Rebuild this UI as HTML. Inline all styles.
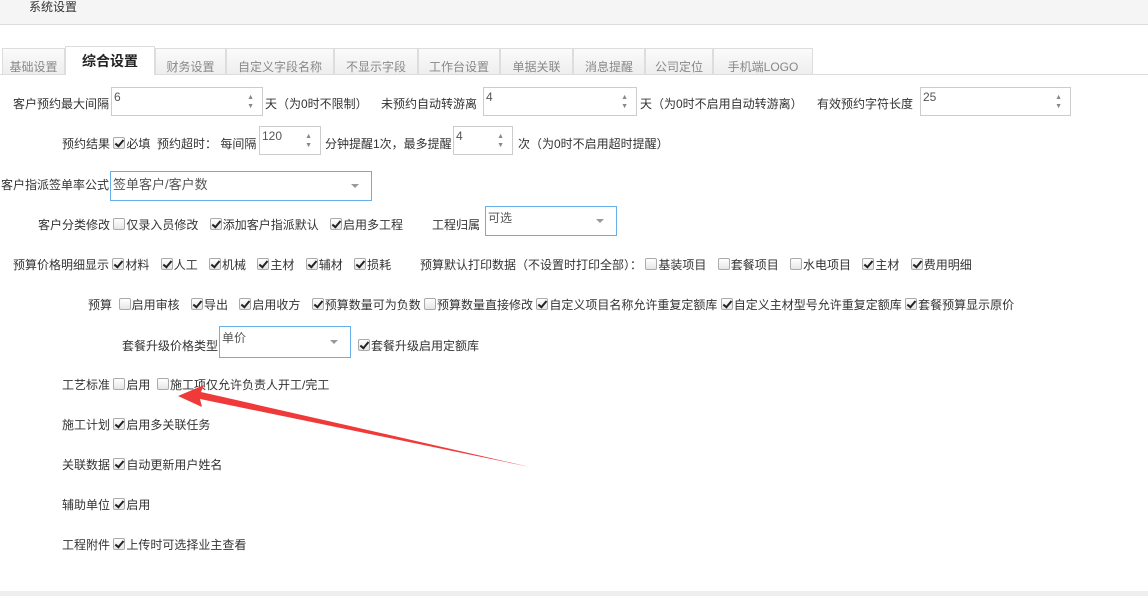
<!DOCTYPE html>
<html><head><meta charset="utf-8"><style>
*{margin:0;padding:0;box-sizing:border-box}
body{width:1148px;height:596px;background:#fff;font-family:"Liberation Sans","Noto Sans CJK SC",sans-serif;font-size:12px;color:#333;position:relative;overflow:hidden}
.top{position:absolute;left:0;top:0;width:1148px;height:25px;background:#f5f5f5;border-bottom:1px solid #ddd}
.top span{position:absolute;left:29px;top:0;line-height:14px;font-size:12px;color:#333}
.tabs{position:absolute;left:0;top:48px;width:1148px;height:27px;border-bottom:1px solid #ddd}
.tab{position:absolute;top:0;height:26px;background:linear-gradient(#fbfbfb,#eee);border:1px solid #ddd;border-bottom:none;color:#888;text-align:center;font-size:12px;line-height:36px}
.tab.a{top:-2px;height:29px;background:#fff;color:#222;font-size:14px;font-weight:bold;line-height:28px}
.r{position:absolute;height:16px;line-height:16px;white-space:nowrap;font-size:12px}
.cb{display:inline-block;width:12px;height:12px;border:1px solid #aaa;border-radius:2px;background:linear-gradient(#fff,#e6e6e6);vertical-align:-1px;margin-right:1px;position:relative}
.cb.c::after{content:"";position:absolute;left:3px;top:0px;width:3px;height:7px;border-right:2px solid #222;border-bottom:2px solid #222;transform:rotate(40deg)}
.g{margin-left:8px}
.in{position:absolute;border:1px solid #ccc;background:#fff;color:#555;font-size:12px;padding:2px 2px}
.in .sp{position:absolute;right:8px;top:50%;color:#888;font-size:7px;line-height:9px;margin-top:-9px}
.sel{position:absolute;border:1px solid #66afe9;background:#fff;color:#555;font-size:12px;padding:2px 2px}
.sel .ar{position:absolute;right:12px;top:50%;margin-top:-2px;border-left:4px solid transparent;border-right:4px solid transparent;border-top:4px solid #999}
.bot{position:absolute;left:0;top:591px;width:1148px;height:5px;background:#eee}
</style></head><body>
<div class="top"><span>系统设置</span></div>
<div class="tabs">
<div class="tab" style="left:2px;width:63px">基础设置</div>
<div class="tab a" style="left:65px;width:90px">综合设置</div>
<div class="tab" style="left:155px;width:71px">财务设置</div>
<div class="tab" style="left:226px;width:108px">自定义字段名称</div>
<div class="tab" style="left:334px;width:84px">不显示字段</div>
<div class="tab" style="left:418px;width:82px">工作台设置</div>
<div class="tab" style="left:500px;width:73px">单据关联</div>
<div class="tab" style="left:573px;width:72px">消息提醒</div>
<div class="tab" style="left:645px;width:68px">公司定位</div>
<div class="tab" style="left:713px;width:100px">手机端LOGO</div>
</div>

<div class="r" style="left:13px;top:96px">客户预约最大间隔</div>
<div class="in" style="left:111px;top:87px;width:152px;height:29px">6<span class="sp">▲<br>▼</span></div>
<div class="r" style="left:265px;top:96px">天（为0时不限制）</div>
<div class="r" style="left:381px;top:96px">未预约自动转游离</div>
<div class="in" style="left:483px;top:87px;width:154px;height:29px">4<span class="sp">▲<br>▼</span></div>
<div class="r" style="left:640px;top:96px">天（为0时不启用自动转游离）</div>
<div class="r" style="left:817px;top:96px">有效预约字符长度</div>
<div class="in" style="left:920px;top:87px;width:151px;height:29px">25<span class="sp">▲<br>▼</span></div>

<div class="r" style="left:62px;top:136px">预约结果 <span class="cb c"></span>必填&nbsp; 预约超时： 每间隔</div>
<div class="in" style="left:259px;top:126px;width:62px;height:29px">120<span class="sp">▲<br>▼</span></div>
<div class="r" style="left:325px;top:136px">分钟提醒1次，最多提醒</div>
<div class="in" style="left:453px;top:126px;width:60px;height:29px">4<span class="sp">▲<br>▼</span></div>
<div class="r" style="left:518px;top:136px">次（为0时不启用超时提醒）</div>

<div class="r" style="left:1px;top:177px">客户指派签单率公式</div>
<div class="sel" style="left:110px;top:171px;width:262px;height:30px;font-size:13px">签单客户/客户数<span class="ar"></span></div>

<div class="r" style="left:38px;top:217px">客户分类修改 <span class="cb"></span>仅录入员修改 <span class="cb c g"></span>添加客户指派默认 <span class="cb c g"></span>启用多工程</div>
<div class="r" style="left:432px;top:217px">工程归属</div>
<div class="sel" style="left:485px;top:206px;width:132px;height:30px">可选<span class="ar"></span></div>

<div class="r" style="left:13px;top:257px">预算价格明细显示 <span class="cb c"></span>材料 <span class="cb c g"></span>人工 <span class="cb c g"></span>机械 <span class="cb c g"></span>主材 <span class="cb c g"></span>辅材 <span class="cb c g"></span>损耗</div>
<div class="r" style="left:420px;top:257px">预算默认打印数据（不设置时打印全部）： <span class="cb"></span>基装项目 <span class="cb g"></span>套餐项目 <span class="cb g"></span>水电项目 <span class="cb c g"></span>主材 <span class="cb c g"></span>费用明细</div>

<div class="r" style="left:88px;top:297px">预算 &nbsp;<span class="cb"></span>启用审核 <span class="cb c g"></span>导出 <span class="cb c g"></span>启用收方 <span class="cb c g"></span>预算数量可为负数 <span class="cb"></span>预算数量直接修改 <span class="cb c"></span>自定义项目名称允许重复定额库 <span class="cb c"></span>自定义主材型号允许重复定额库 <span class="cb c"></span>套餐预算显示原价</div>

<div class="r" style="left:122px;top:338px">套餐升级价格类型</div>
<div class="sel" style="left:219px;top:326px;width:132px;height:32px">单价<span class="ar"></span></div>
<div class="r" style="left:358px;top:338px"><span class="cb c"></span>套餐升级启用定额库</div>

<div class="r" style="left:62px;top:377px">工艺标准 <span class="cb"></span>启用 &nbsp;<span class="cb"></span>施工项仅允许负责人开工/完工</div>
<div class="r" style="left:62px;top:417px">施工计划 <span class="cb c"></span>启用多关联任务</div>
<div class="r" style="left:62px;top:457px">关联数据 <span class="cb c"></span>自动更新用户姓名</div>
<div class="r" style="left:62px;top:497px">辅助单位 <span class="cb c"></span>启用</div>
<div class="r" style="left:62px;top:537px">工程附件 <span class="cb c"></span>上传时可选择业主查看</div>

<svg style="position:absolute;left:0;top:0" width="1148" height="596">
<polygon points="178,396 204,385 201,392 530,467 200,399 202,407" fill="#f03a3a"/>
</svg>
<div class="bot"></div>
</body></html>
